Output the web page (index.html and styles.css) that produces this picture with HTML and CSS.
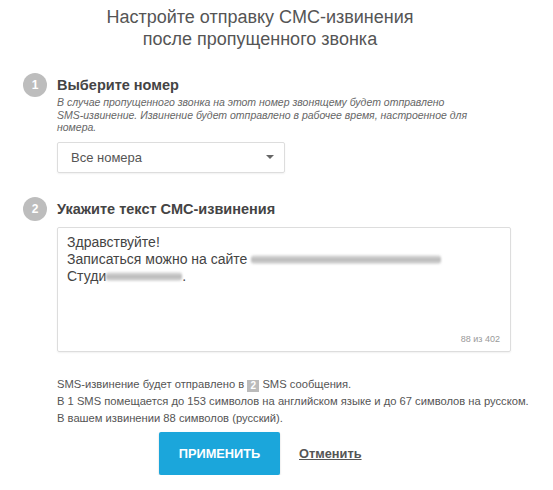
FILE: index.html
```html
<!DOCTYPE html>
<html lang="ru">
<head>
<meta charset="utf-8">
<link rel="stylesheet" href="styles.css">
</head>
<body>
<div class="page">
  <h1 class="title">Настройте отправку СМС-извинения<br>после пропущенного звонка</h1>

  <section class="step step-one">
    <div class="num">1</div>
    <div class="body">
      <h2 class="step-title">Выберите номер</h2>
      <p class="hint">В случае пропущенного звонка на этот номер звонящему будет отправлено SMS-&#8288;извинение. Извинение будет отправлено в рабочее время, настроенное для номера.</p>
      <div class="select">
        <span>Все номера</span>
        <span class="caret"></span>
      </div>
    </div>
  </section>

  <section class="step step-two">
    <div class="num">2</div>
    <div class="body">
      <h2 class="step-title">Укажите текст СМС-извинения</h2>
    </div>
  </section>

  <div class="textarea">
    <div class="msg">
      <div>Здравствуйте!</div>
      <div>Записаться можно на сайте <span class="blur blur-long"></span></div>
      <div>Студи<span class="blur blur-short"></span>.</div>
    </div>
    <div class="counter">88 из 402</div>
  </div>

  <div class="info">
    <div>SMS-извинение будет отправлено в <span class="badge">2</span> SMS сообщения.</div>
    <div>В 1 SMS помещается до 153 символов на английском языке и до 67 символов на русском.</div>
    <div>В вашем извинении 88 символов (русский).</div>
  </div>

  <div class="actions">
    <button class="apply">ПРИМЕНИТЬ</button>
    <a class="cancel" href="#">Отменить</a>
  </div>
</div>
</body>
</html>
```

FILE: styles.css
```css
* { box-sizing: border-box; }
html, body { margin: 0; padding: 0; background: #fff; }
body {
  font-family: "Liberation Sans", Arial, sans-serif;
  color: #555;
}
.page {
  width: 520px;
  padding-top: 6px;
}
.title {
  margin: 0;
  text-align: center;
  font-weight: normal;
  font-size: 18px;
  line-height: 22px;
  color: #555;
}
.step {
  display: flex;
  align-items: flex-start;
  gap: 10px;
  padding-left: 23px;
}
.step-one { margin-top: 23px; }
.step-two { margin-top: 24px; }
.num {
  flex: 0 0 24px;
  width: 24px;
  height: 24px;
  border-radius: 50%;
  background: #bdbdbd;
  color: #fff;
  font-weight: bold;
  font-size: 12px;
  line-height: 24px;
  text-align: center;
}
.body { flex: 1; }
.step-title {
  margin: 3px 0 0;
  font-size: 14.5px;
  line-height: 18px;
  font-weight: bold;
  color: #444;
}
.hint {
  margin: 2px 0 0;
  font-size: 10.5px;
  line-height: 12.5px;
  font-style: italic;
  color: #666;
  width: 420px;
}
.select {
  margin-top: 8px;
  width: 228px;
  height: 31px;
  border: 1px solid #ddd;
  border-radius: 2px;
  box-shadow: 0 1px 2px rgba(0,0,0,0.06);
  display: flex;
  align-items: center;
  justify-content: space-between;
  padding: 0 10px 0 13px;
  font-size: 13px;
  color: #555;
}
.caret {
  width: 0;
  height: 0;
  border-left: 4px solid transparent;
  border-right: 4px solid transparent;
  border-top: 4px solid #666;
}
.textarea {
  margin: 6px 0 0 57px;
  width: 454px;
  height: 125px;
  border: 1px solid #ddd;
  border-radius: 2px;
  box-shadow: 0 1px 2px rgba(0,0,0,0.06);
  display: flex;
  flex-direction: column;
  justify-content: space-between;
  padding: 6px 10px 7px 9px;
}
.msg {
  font-size: 14px;
  line-height: 17px;
  color: #444;
}
.blur {
  display: inline-block;
  height: 9px;
  vertical-align: 0;
  background: linear-gradient(#e6e6e6, #b8b8b8 50%, #dcdcdc);
  filter: blur(0.8px);
  border-radius: 3px;
}
.blur-long { width: 190px; }
.blur-short { width: 76px; }
.counter {
  text-align: right;
  font-size: 9px;
  color: #999;
}
.info {
  margin: 24px 0 0 57px;
  font-size: 11.2px;
  line-height: 17px;
  color: #555;
  white-space: nowrap;
}
.badge {
  display: inline-block;
  background: #bbb;
  color: #fff;
  font-weight: bold;
  width: 12px;
  height: 12px;
  line-height: 12px;
  text-align: center;
  font-size: 10px;
  vertical-align: -1px;
}
.actions {
  margin: 5px 0 0 159px;
  display: flex;
  align-items: center;
  gap: 19px;
}
.apply {
  width: 121px;
  height: 43px;
  border: none;
  border-radius: 2px;
  background: #1ba6db;
  box-shadow: 0 1px 2px rgba(0,0,0,0.2);
  color: #fff;
  font-family: "Liberation Sans", Arial, sans-serif;
  font-weight: bold;
  font-size: 12.8px;
  padding: 0;
}
.cancel {
  font-size: 12.8px;
  font-weight: bold;
  color: #555;
  text-decoration: underline;
}
```
